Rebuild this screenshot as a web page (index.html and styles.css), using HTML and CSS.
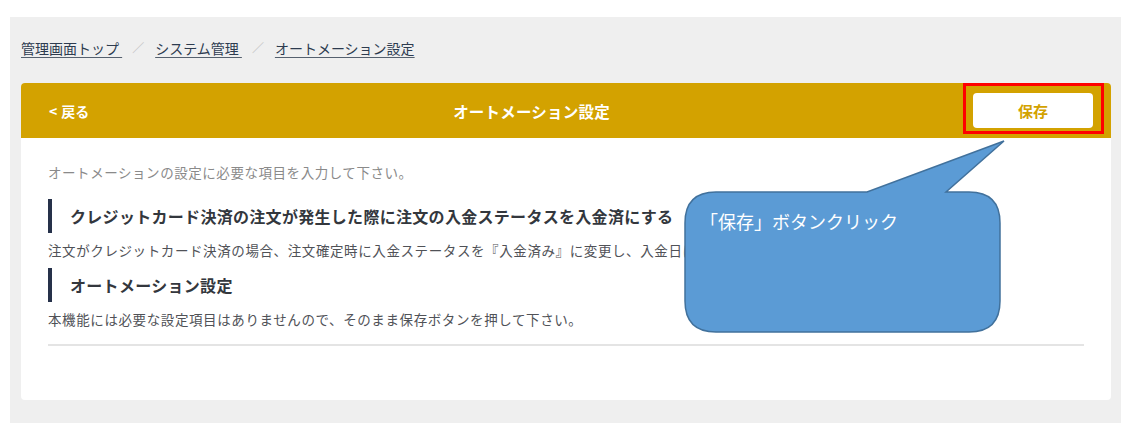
FILE: index.html
```html
<!DOCTYPE html>
<html lang="ja">
<head>
<meta charset="utf-8">
<link rel="stylesheet" href="styles.css">
</head>
<body>
<div class="frame">
  <nav class="crumbs">
    <a class="crumb" href="#">管理画面トップ&nbsp;</a>
    <span class="sep">／</span>
    <a class="crumb" href="#">システム管理&nbsp;</a>
    <span class="sep">／</span>
    <a class="crumb" href="#">オートメーション設定</a>
  </nav>
  <section class="card">
    <header class="card-head">
      <a class="back" href="#"><span class="lt">&lt;</span>戻る</a>
      <h1 class="title">オートメーション設定</h1>
      <div class="save-wrap"><button class="save">保存</button></div>
    </header>
    <div class="card-body">
      <p class="lead">オートメーションの設定に必要な項目を入力して下さい。</p>
      <h2 class="sec">クレジットカード決済の注文が発生した際に注文の入金ステータスを入金済にする</h2>
      <p class="txt">注文がクレジットカード決済の場合、注文確定時に入金ステータスを『入金済み』に変更し、入金日には注文確定日を設定します。</p>
      <h2 class="sec">オートメーション設定</h2>
      <p class="txt">本機能には必要な設定項目はありませんので、そのまま保存ボタンを押して下さい。</p>
      <hr class="rule">
    </div>
  </section>
</div>
<div class="callout">
  <svg class="callout-shape" width="330" height="200" viewBox="0 0 330 200">
    <path d="M33 52 L184 52 L321 1 L263 52 L286 52 Q317 52 317 83 L317 161 Q317 192 286 192 L33 192 Q2 192 2 161 L2 83 Q2 52 33 52 Z" fill="#5b9bd5" stroke="#41719c" stroke-width="1.5"/>
  </svg>
  <span class="callout-text">「保存」ボタンクリック</span>
</div>
</body>
</html>
```
FILE: styles.css
```css
* { box-sizing: border-box; }
html, body { margin: 0; padding: 0; background: #fff; }
body {
  font-family: "Noto Sans CJK JP", "Noto Sans", sans-serif;
  position: relative;
  width: 1143px;
  height: 447px;
  overflow: hidden;
}
.frame {
  margin: 17px 0 0 10px;
  width: 1111px;
  height: 406px;
  background: #efefef;
  padding: 21px 10px 23px 11px;
  display: flex;
  flex-direction: column;
}
.crumbs {
  display: flex;
  align-items: center;
  height: 20px;
  font-size: 14px;
  line-height: 20px;
  margin-bottom: 25px;
}
.crumb {
  color: #2d3b4f;
  text-decoration: underline;
  text-underline-offset: 3px;
  text-decoration-color: #55606e;
}
.sep {
  color: #c4c4c4;
  font-size: 12px;
  margin: 0 11px 0 10px;
}
.card {
  flex: 1;
  background: #fff;
  border-radius: 4px;
  overflow: hidden;
  display: flex;
  flex-direction: column;
}
.card-head {
  height: 55px;
  background: #d3a200;
  display: flex;
  align-items: center;
  padding: 0 18px 0 28px;
}
.back {
  color: #fff;
  font-size: 14px;
  font-weight: 700;
  text-decoration: none;
  width: 41px;
  white-space: nowrap;
  display: flex;
  align-items: center;
}
.lt {
  margin-right: 4px;
}
.title {
  flex: 1;
  margin: 0;
  text-align: center;
  color: #fff;
  font-size: 15.5px;
  font-weight: 700;
  letter-spacing: 0.2px;
}
.save-wrap {
  position: relative;
}
.save-wrap::after {
  content: "";
  position: absolute;
  left: -10px;
  top: -10px;
  right: -11px;
  bottom: -6px;
  border: 3px solid #f00;
}
.save {
  display: block;
  width: 120px;
  height: 35px;
  background: #fff;
  border: none;
  border-radius: 4px;
  color: #d3a200;
  font-family: inherit;
  font-size: 15px;
  font-weight: 700;
}
.card-body {
  padding: 24px 27px 0 27px;
}
.lead {
  margin: 0 0 17px;
  font-size: 13.5px;
  line-height: 20px;
  color: #8a8a8a;
  letter-spacing: 0.55px;
}
.sec {
  margin: 0;
  border-left: 4px solid #26314a;
  padding-left: 18px;
  height: 34px;
  line-height: 34px;
  font-size: 16px;
  font-weight: 700;
  color: #33373d;
  letter-spacing: 0.3px;
}
.txt {
  margin: 7px 0 8px;
  font-size: 13.5px;
  line-height: 20px;
  color: #505257;
  white-space: nowrap;
  letter-spacing: 0.6px;
}
.rule {
  margin: 15px 0 0;
  border: none;
  height: 2px;
  background: #e4e4e4;
}
.callout {
  position: absolute;
  left: 683px;
  top: 140px;
  width: 330px;
  height: 200px;
}
.callout-shape {
  position: absolute;
  left: 0;
  top: 0;
}
.callout-text {
  position: absolute;
  left: 17px;
  top: 68px;
  color: #fff;
  font-size: 18px;
  line-height: 26px;
  white-space: nowrap;
}
```
